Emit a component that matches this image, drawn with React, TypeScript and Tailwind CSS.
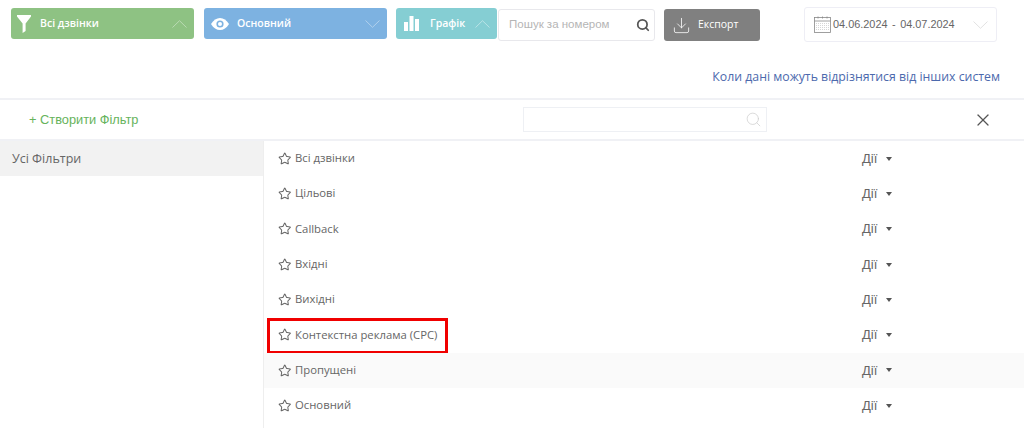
import React from 'react';
import { Search, Download, X, Star } from 'lucide-react';

const filters = ['Всі дзвінки', 'Цільові', 'Callback', 'Вхідні', 'Вихідні', 'Контекстна реклама (CPC)', 'Пропущені', 'Основний'];

const FunnelIcon = () => (
    <svg width="14" height="18" viewBox="0 0 14 18" fill="white">
        <path d="M0 0h14v1.500L8.600 8.500v7.500L5.600 18V8.500L0 1.500z" />
    </svg>
);

const BarsIcon = () => (
    <svg width="15" height="15" viewBox="0 0 15 15" fill="white">
        <rect x="0" y="6" width="4" height="9" />
        <rect x="5.500" y="0" width="4" height="15" />
        <rect x="11" y="3" width="4" height="12" />
    </svg>
);

const EyeIcon = () => (
    <svg width="18" height="12" viewBox="0 0 18 12">
        <path d="M0 6C2.500 2 5.500 0 9 0s6.500 2 9 6c-2.500 4-5.500 6-9 6S2.500 10 0 6z" fill="white" />
        <circle cx="9" cy="6" r="3.600" fill="#7db2e1" />
        <circle cx="9" cy="6" r="2" fill="white" />
    </svg>
);

const Caret = ({ up, color }: { up?: boolean; color: string }) => (
    <svg width="15" height="8" viewBox="0 0 15 8" fill="none" stroke={color} strokeWidth="1">
        <path d={up ? 'M0.500 7.500L7.500 0.700l7 6.800' : 'M0.500 0.500L7.500 7.300l7-6.800'} />
    </svg>
);

const CalendarIcon = () => (
    <svg width="17" height="17" viewBox="0 0 17 17" fill="none" stroke="#888" strokeWidth="0.800">
        <rect x="0.500" y="1.500" width="16" height="15" />
        <path d="M0.500 5h16" />
        <path d="M4 0.500v2M8.500 0.500v2M13 0.500v2" />
        <path d="M2 7.500h13M2 9.500h13M2 11.500h13M2 13.500h13" stroke="#ccc" strokeDasharray="1 1" />
    </svg>
);

export default function App() {
    return (
        <div className="w-[1024px] h-[428px] overflow-hidden bg-white font-['Open_Sans',sans-serif] text-[#666]">
            {/* Top toolbar */}
            <div className="flex items-start h-[68px] pt-2 pl-[11px]">
                <button className="w-[183px] h-[31px] flex items-center pl-[6px] pr-[7px] rounded-[3px] bg-[#8ec283] text-white text-[10.500px] font-semibold">
                    <FunnelIcon />
                    <span className="ml-[9px]">Всі дзвінки</span>
                    <span className="ml-auto flex"><Caret up color="#b9dab2" /></span>
                </button>
                <button className="ml-[10px] w-[183px] h-[31px] flex items-center pl-[7px] pr-[7px] rounded-[3px] bg-[#7db2e1] text-white text-[10.500px] font-semibold">
                    <EyeIcon />
                    <span className="ml-[8px]">Основний</span>
                    <span className="ml-auto flex"><Caret color="#b0d0ec" /></span>
                </button>
                <button className="ml-[9px] w-[101px] h-[31px] flex items-center pl-[8px] pr-[7px] rounded-[3px] bg-[#85ced3] text-white text-[10.500px] font-semibold">
                    <BarsIcon />
                    <span className="ml-[11px]">Графік</span>
                    <span className="ml-auto flex"><Caret up color="#b9e3e6" /></span>
                </button>
                <div className="ml-px mt-px w-[157px] h-[32px] flex items-center pl-[10px] pr-[4px] rounded-[3px] border border-[#e8e8ec] font-['Liberation_Sans',sans-serif] text-[11.500px] text-[#b5b5b5]">
                    <span>Пошук за номером</span>
                    <Search className="ml-auto w-[14px] h-[14px] text-[#555]" strokeWidth={3} />
                </div>
                <button className="ml-[9px] mt-px w-[96px] h-[32px] flex items-center pl-2 rounded-[3px] bg-[#808080] text-white text-[10.500px]">
                    <Download className="w-[19px] h-[19px]" strokeWidth={1} />
                    <span className="ml-[7px]">Експорт</span>
                </button>
                <div className="ml-[44px] -mt-px w-[193px] h-[35px] flex items-center pl-[9px] rounded-[3px] border border-[#eeeef5] font-['Liberation_Sans',sans-serif] text-[10.900px] text-[#666]">
                    <CalendarIcon />
                    <span className="ml-[2px]">04.06.2024</span>
                    <span className="mx-[4.500px]">-</span>
                    <span>04.07.2024</span>
                    <span className="ml-[18px] flex"><Caret color="#e2e2e2" /></span>
                </div>
            </div>

            {/* Info link */}
            <div className="h-[30px] pr-[24px] flex items-start justify-end text-[12.300px] text-[#4c69ad]">
                Коли дані можуть відрізнятися від інших систем
            </div>

            {/* Filter panel header */}
            <div className="h-[43px] flex items-center border-y-2 border-[#f0f1f5]">
                <span className="ml-[29px] w-[494px] pt-[1px] font-['Liberation_Sans',sans-serif] text-[12.800px] text-[#66b35c]">+ Створити Фільтр</span>
                <div className="w-[244px] h-[25px] flex items-center justify-end pr-[4px] border border-[#eef0f4]">
                    <Search className="w-[17px] h-[17px] text-[#ccc]" strokeWidth={1} />
                </div>
                <X className="ml-[206px] w-[20px] h-[20px] text-[#555]" strokeWidth={1.500} />
            </div>

            {/* Filter list */}
            <div className="flex">
                <div className="w-[264px] shrink-0 border-r border-[#eeeeee] h-[290px]">
                    <div className="h-[35px] flex items-center pl-[12px] pt-[2px] bg-[#f2f2f2] text-[12.500px] text-[#666]">Усі Фільтри</div>
                </div>
                <div className="flex-1">
                    {filters.map((name, i) => (
                        <div
                            key={name}
                            className={`h-[35.300px] flex items-center pl-[14px] text-[11.300px] relative ${name === 'Пропущені' ? 'bg-[#fafafa]' : ''}`}
                        >
                            <Star className="w-[13.500px] h-[13.500px] text-[#666]" strokeWidth={1.800} />
                            <span className="ml-[3.500px]">{name}</span>
                            <span className="absolute left-[598px] font-['Liberation_Sans',sans-serif] text-[13px]">Дії</span>
                            <span className="absolute left-[622px] w-0 h-0 border-x-[3.500px] border-x-transparent border-t-[4px] border-t-[#555]" />
                            {i === 5 && <div className="absolute left-[3px] top-[1px] w-[181px] h-[36px] border-[3px] border-[#f00000] pointer-events-none" />}
                        </div>
                    ))}
                </div>
            </div>
        </div>
    );
}
